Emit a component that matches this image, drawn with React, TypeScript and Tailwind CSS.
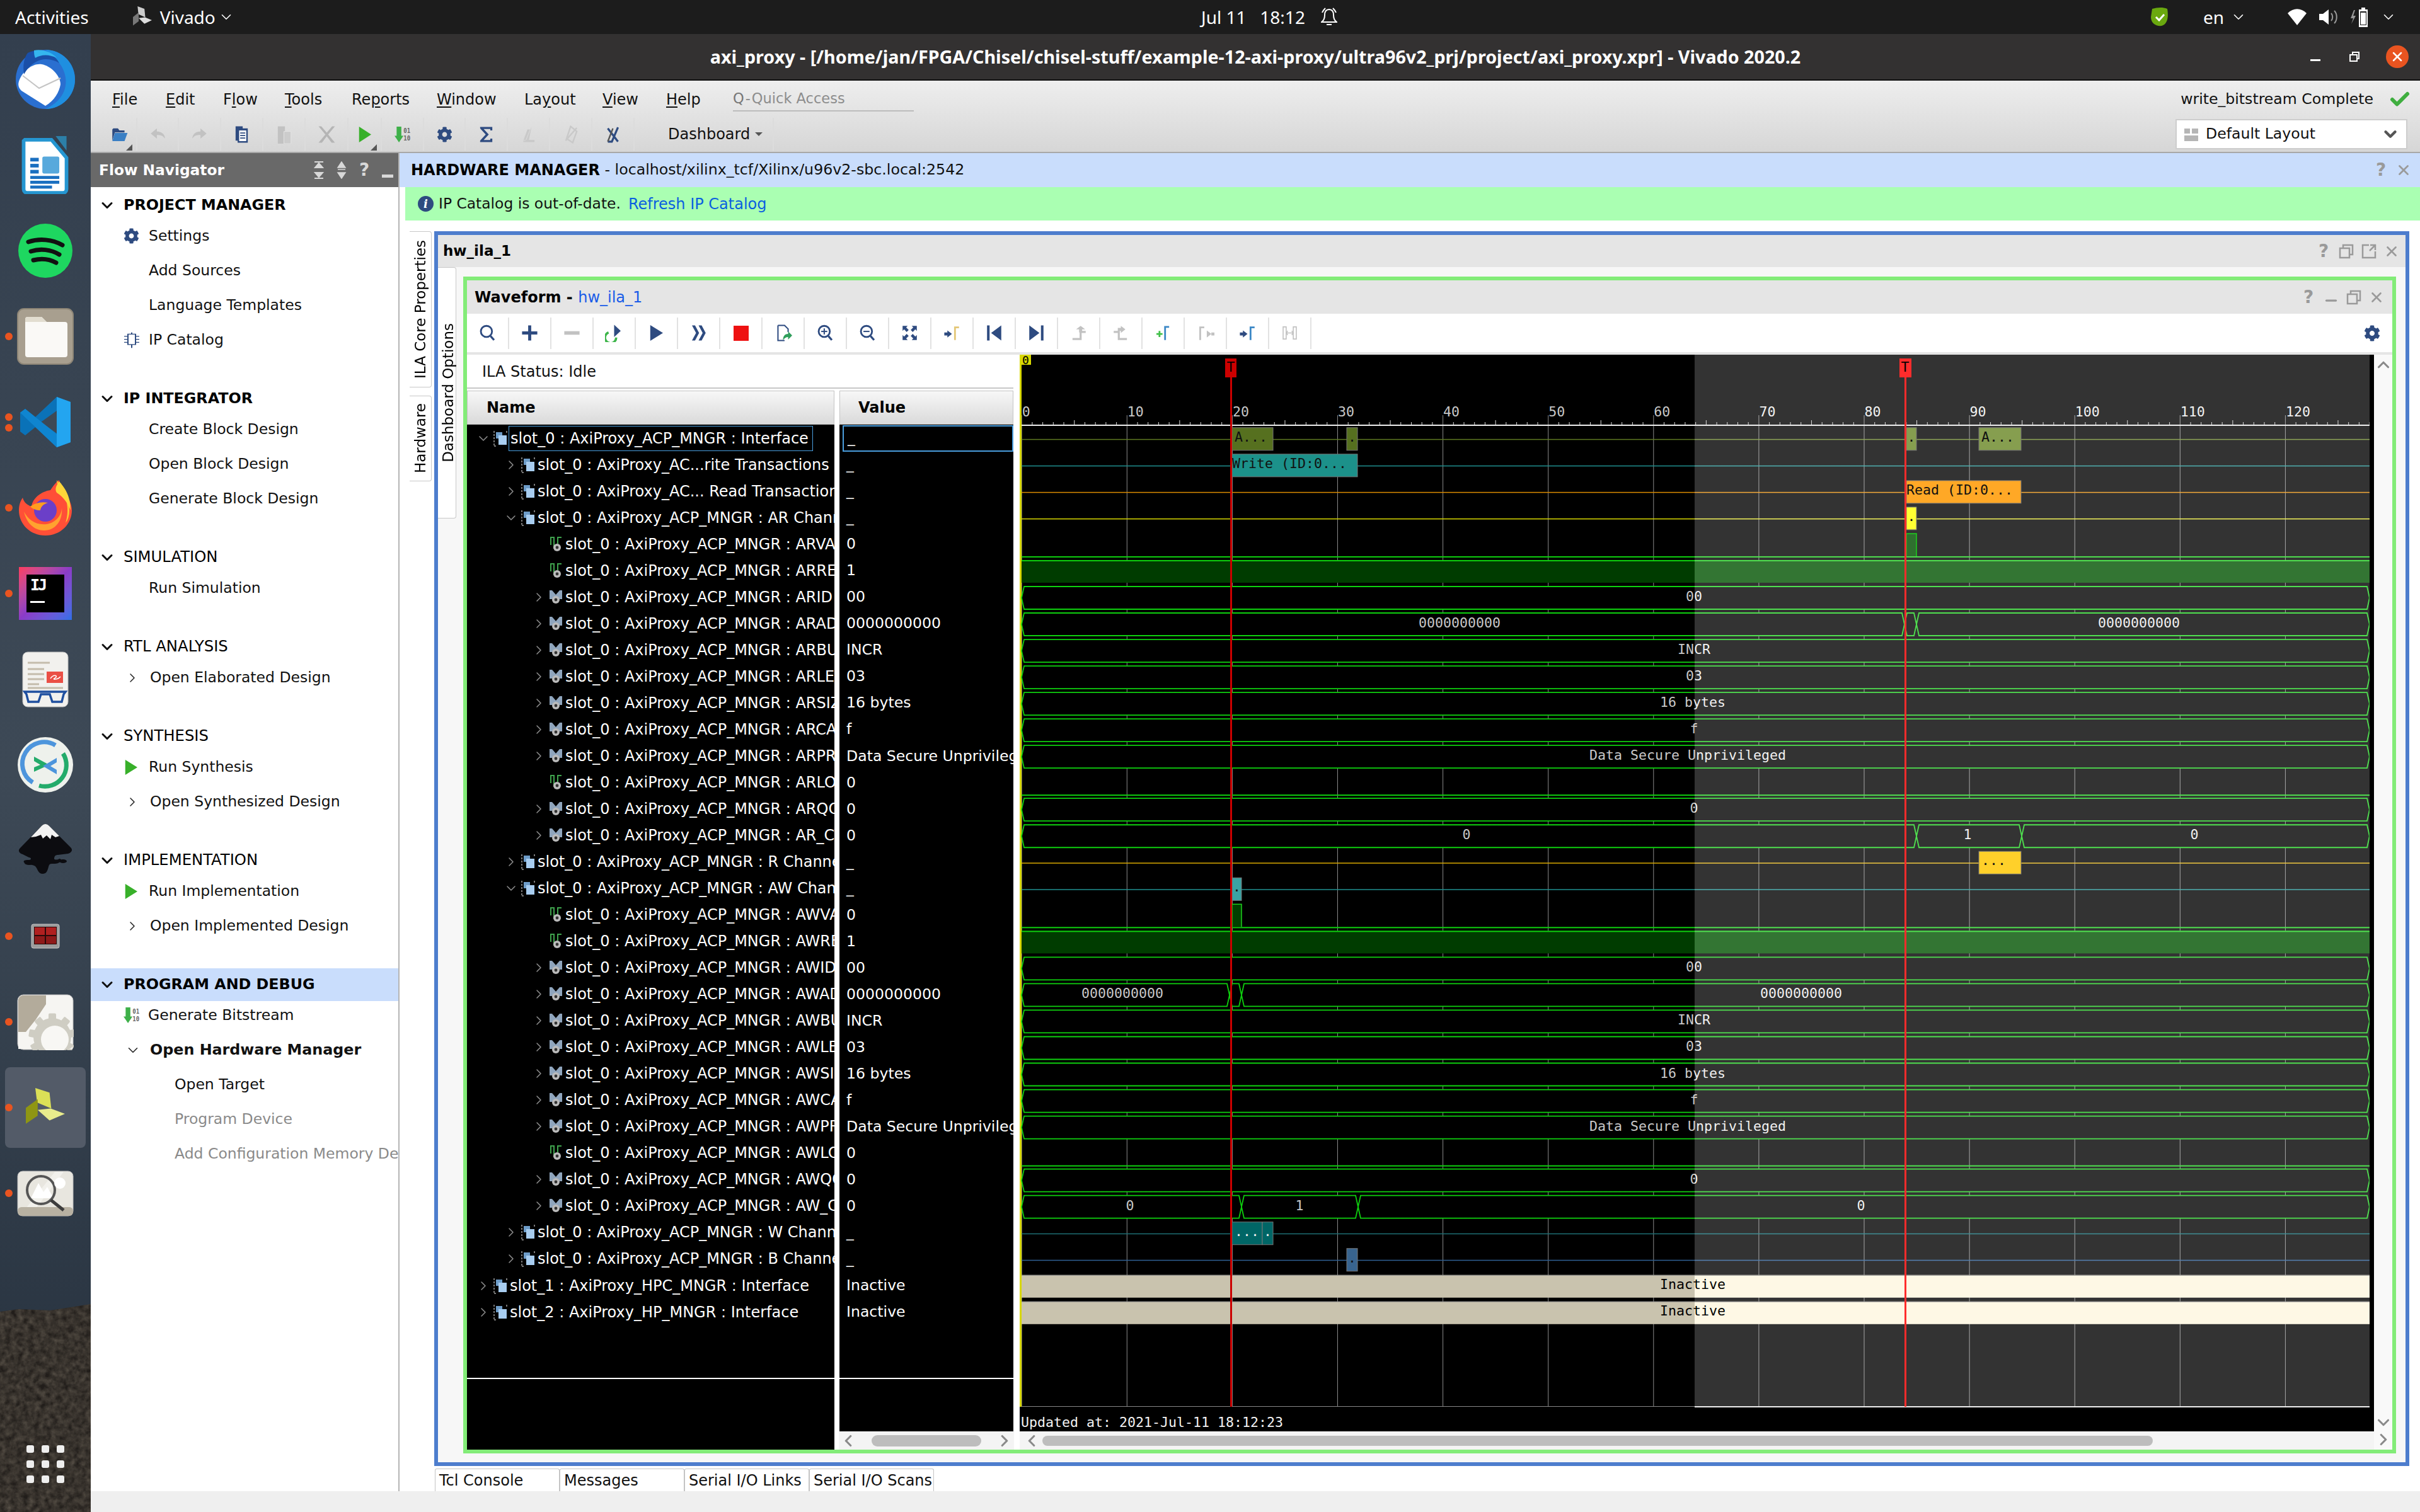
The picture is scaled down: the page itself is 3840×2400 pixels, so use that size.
import React from "react";
import { ChevronDown, ChevronRight, ChevronLeft, ChevronUp, X, Check, Minus } from "lucide-react";
import { FaCog } from "react-icons/fa";

type Row = { d: number; kind: "group" | "bus" | "leaf"; open?: boolean; name: string; value: string };

const P = "slot_0 : AxiProxy_ACP_MNGR : ";
const channel = (a: string, last: string): Row[] => [
  { d: 2, kind: "leaf", name: `${P}${a}VALID`, value: "0" },
  { d: 2, kind: "leaf", name: `${P}${a}READY`, value: "1" },
  { d: 2, kind: "bus", name: `${P}${a}ID`, value: "00" },
  { d: 2, kind: "bus", name: `${P}${a}ADDR`, value: "0000000000" },
  { d: 2, kind: "bus", name: `${P}${a}BURST`, value: "INCR" },
  { d: 2, kind: "bus", name: `${P}${a}LEN`, value: "03" },
  { d: 2, kind: "bus", name: `${P}${a}SIZE`, value: "16 bytes" },
  { d: 2, kind: "bus", name: `${P}${a}CACHE`, value: "f" },
  { d: 2, kind: "bus", name: `${P}${a}PROT`, value: "Data Secure Unprivileged" },
  { d: 2, kind: "leaf", name: `${P}${a}LOCK`, value: "0" },
  { d: 2, kind: "bus", name: `${P}${a}QOS`, value: "0" },
  { d: 2, kind: "bus", name: `${P}${last}`, value: "0" },
];

const rows: Row[] = [
  { d: 0, kind: "group", open: true, name: `${P}Interface`, value: "_" },
  { d: 1, kind: "group", name: "slot_0 : AxiProxy_AC...rite Transactions", value: "_" },
  { d: 1, kind: "group", name: "slot_0 : AxiProxy_AC... Read Transactions", value: "_" },
  { d: 1, kind: "group", open: true, name: `${P}AR Channel`, value: "_" },
  ...channel("AR", "AR_CTRL"),
  { d: 1, kind: "group", name: `${P}R Channel`, value: "_" },
  { d: 1, kind: "group", open: true, name: `${P}AW Channel`, value: "_" },
  ...channel("AW", "AW_CTRL"),
  { d: 1, kind: "group", name: `${P}W Channel`, value: "_" },
  { d: 1, kind: "group", name: `${P}B Channel`, value: "_" },
  { d: 0, kind: "group", name: "slot_1 : AxiProxy_HPC_MNGR : Interface", value: "Inactive" },
  { d: 0, kind: "group", name: "slot_2 : AxiProxy_HP_MNGR : Interface", value: "Inactive" },
];

const GroupIcon = () => (
  <svg width="22" height="26" viewBox="0 0 22 26" className="shrink-0">
    <path d="M1 1v24M21 1v3M1 25h3" stroke="#777" strokeWidth="2" strokeDasharray="3 2" fill="none" />
    <rect x="4" y="3" width="10" height="10" fill="#6d9cc8" />
    <rect x="8" y="8" width="13" height="15" fill="#a8cdf0" />
  </svg>
);

const BusIcon = () => (
  <svg width="22" height="26" viewBox="0 0 22 26" className="shrink-0">
    <path d="M1 2h4l6 7 6-7h4v14h-4l-6-4-6 4H1z" fill="#8fa5bd" />
    <circle cx="11" cy="17" r="6" fill="#bbb" />
    <circle cx="11" cy="17" r="2.4" fill="#333" />
  </svg>
);

const LeafIcon = () => (
  <svg width="22" height="26" viewBox="0 0 22 26" className="shrink-0">
    <path d="M3 14V2h5v18M14 12V2h6" stroke="#3fa34d" strokeWidth="2" fill="none" />
    <circle cx="13" cy="18" r="6" fill="#bbb" />
    <circle cx="13" cy="18" r="2.4" fill="#333" />
  </svg>
);

const SolidGear = ({ c = "#2e4b80" }: { c?: string }) => <FaCog size={25} color={c} />;

const Tri = ({ c = "#38b02a", w = 20, h = 24 }: { c?: string; w?: number; h?: number }) => (
  <svg width={w} height={h} viewBox="0 0 26 26" preserveAspectRatio="none">
    <path d="M1 0l25 13L1 26z" fill={c} />
  </svg>
);

const BitIcon = () => (
  <svg width="25" height="27" viewBox="0 0 30 28" preserveAspectRatio="none">
    <path d="M4 1h9v15h4L8.500 27 0 16h4z" fill="#3eb049" />
    <text x="17" y="11" fontSize="11" fontWeight="700" fill="#666" fontFamily="DejaVu Sans Mono">01</text>
    <text x="17" y="24" fontSize="11" fontWeight="700" fill="#666" fontFamily="DejaVu Sans Mono">10</text>
  </svg>
);

const NavChevron = () => <ChevronRight size={24} strokeWidth={1.5} color="#222" />;

const Section = ({ title, bold, active, children }: { title: string; bold?: boolean; active?: boolean; children: React.ReactNode }) => (
  <div className="mb-[44px]">
    <div className={`flex items-center gap-[12px] pl-[12px] ${active ? "h-[52px] -my-[4.5px] bg-[#c9ddfc]" : "h-[43px]"}`}>
      <ChevronDown size={28} strokeWidth={2.6} color="#111" />
      <span className={`text-black ${bold ? "font-bold text-[23.8px]" : "text-[24.3px]"}`}>{title}</span>
    </div>
    {children}
  </div>
);

const Item = ({ label, pad = 92, lead, grey, bold }: { label: string; pad?: number; lead?: React.ReactNode; grey?: boolean; bold?: boolean }) => (
  <div className="flex items-center h-[55px] whitespace-nowrap" style={{ paddingLeft: pad }}>
    {lead}
    <span className={`${grey ? "text-[#8a8a8a]" : "text-[#111]"} ${bold ? "font-bold text-[23.8px]" : "text-[23.5px]"}`}>{label}</span>
  </div>
);

const FlowNavigator = () => (
  <div className="w-[490px] shrink-0 flex flex-col border-r-2 border-[#b5b5b5] bg-white overflow-hidden">
    <div className="h-[54px] shrink-0 bg-[#696969] flex items-center pl-[13px] pr-[8px] text-white">
      <span className="font-bold text-[23.3px] flex-1">Flow Navigator</span>
      <div className="flex items-center gap-[16px] text-[#d8d8d8]">
        <svg width="20" height="28" viewBox="0 0 20 28"><path d="M3 1h14M3 27h14M10 3L4 10h12zM10 25l-6-7h12z" stroke="#d8d8d8" strokeWidth="2" fill="#d8d8d8" /></svg>
        <svg width="20" height="28" viewBox="0 0 20 28"><path d="M10 1L4 10h12zM10 27l-6-9h12zM4 13h12" stroke="#d8d8d8" strokeWidth="1.500" fill="#d8d8d8" /></svg>
        <span className="font-bold text-[28px] w-[20px] text-center">?</span>
        <span className="w-[18px] h-[5px] bg-[#d8d8d8] mt-[18px] ml-[2px]" />
      </div>
    </div>
    <div className="pt-[7px] flex-1">
      <Section title="PROJECT MANAGER" bold>
        <Item label="Settings" pad={52} lead={<span className="w-[40px] flex"><SolidGear /></span>} />
        <Item label="Add Sources" />
        <Item label="Language Templates" />
        <Item
          label="IP Catalog"
          pad={52}
          lead={
            <span className="w-[40px] flex">
              <svg width="26" height="26" viewBox="0 0 26 38" preserveAspectRatio="none"><path d="M7 5h12v24H7zM13 1v4M13 29v8M1 10h6M1 17h6M1 24h6M19 10h6M19 17h6M19 24h6" stroke="#2e4b80" strokeWidth="2" fill="none" /></svg>
            </span>
          }
        />
      </Section>
      <Section title="IP INTEGRATOR" bold>
        <Item label="Create Block Design" />
        <Item label="Open Block Design" />
        <Item label="Generate Block Design" />
      </Section>
      <Section title="SIMULATION">
        <Item label="Run Simulation" />
      </Section>
      <Section title="RTL ANALYSIS">
        <Item label="Open Elaborated Design" pad={52} lead={<span className="w-[42px] flex pl-[2px]"><NavChevron /></span>} />
      </Section>
      <Section title="SYNTHESIS">
        <Item label="Run Synthesis" pad={54} lead={<span className="w-[38px] flex"><Tri /></span>} />
        <Item label="Open Synthesized Design" pad={52} lead={<span className="w-[42px] flex pl-[2px]"><NavChevron /></span>} />
      </Section>
      <Section title="IMPLEMENTATION">
        <Item label="Run Implementation" pad={54} lead={<span className="w-[38px] flex"><Tri /></span>} />
        <Item label="Open Implemented Design" pad={52} lead={<span className="w-[42px] flex pl-[2px]"><NavChevron /></span>} />
      </Section>
      <Section title="PROGRAM AND DEBUG" bold active>
        <Item label="Generate Bitstream" pad={52} lead={<span className="w-[39px] flex"><BitIcon /></span>} />
        <Item label="Open Hardware Manager" bold pad={52} lead={<span className="w-[42px] flex pl-[2px]"><ChevronDown size={26} strokeWidth={1.5} color="#222" /></span>} />
        <Item label="Open Target" pad={133} />
        <Item label="Program Device" pad={133} grey />
        <Item label="Add Configuration Memory Device" pad={133} grey />
      </Section>
    </div>
  </div>
);

// ---- dock ----

const DockCell = ({ dots = 0, active, children }: { dots?: number; active?: boolean; children: React.ReactNode }) => (
  <div className="relative h-[136px] flex items-center justify-center">
    {active && <div className="absolute left-[8px] right-[8px] top-[4px] bottom-[4px] rounded-[8px] bg-[#535b68]" />}
    {dots > 0 && (
      <div className="absolute left-[8px] top-0 bottom-0 flex flex-col justify-center gap-[5px]">
        {Array.from({ length: dots }).map((_, i) => (
          <span key={i} className="w-[12px] h-[12px] rounded-full bg-[#e95420]" />
        ))}
      </div>
    )}
    <div className="relative flex">{children}</div>
  </div>
);

const Cog = ({ cx, cy, r, fill }: { cx: number; cy: number; r: number; fill: string }) => (
  <g fill={fill}>
    {[0, 40, 80, 120, 160, 200, 240, 280, 320].map((a) => (
      <rect key={a} x={cx - r * 0.2} y={cy - r * 1.25} width={r * 0.4} height={r * 0.5} rx="2" transform={`rotate(${a} ${cx} ${cy})`} />
    ))}
    <circle cx={cx} cy={cy} r={r} />
  </g>
);

const Dock = () => (
  <div className="relative w-[144px] shrink-0 bg-gradient-to-b from-[#333f4e] via-[#3d4956] to-[#25303d] overflow-hidden">
    <div className="relative pt-[4px]">
      <DockCell>
        <svg width="96" height="96" viewBox="0 0 96 96">
          <ellipse cx="48" cy="48" rx="47" ry="47" fill="#2a6fd0" />
          <path d="M48 1c26 0 47 21 47 47S74 95 48 95c14-6 36-22 32-50C77 24 60 10 48 1z" fill="#1f8fe0" />
          <path d="M8 46c6-12 20-24 34-22 14 2 30 18 30 32-2 12-10 26-24 34L10 66C4 60 4 54 8 46z" fill="#fff" />
          <path d="M12 42l26 20 34-16" stroke="#c5c5c5" strokeWidth="2" fill="none" />
          <path d="M20 6C34-2 60 2 70 22 54 12 30 12 14 40 12 26 14 14 20 6z" fill="#1a4fa8" />
          <path d="M30 2c14-3 30 4 36 12-12-6-24-6-34 0-2-4-2-8-2-12z" fill="#35b6ef" />
        </svg>
      </DockCell>
      <DockCell>
        <svg width="76" height="92" viewBox="0 0 78 96">
          <path d="M5 6h44l25 30v52a6 6 0 0 1-6 6H9a6 6 0 0 1-6-6V8z" fill="#fff" stroke="#2596d1" strokeWidth="6" />
          <path d="M56 0h18v24z" fill="#2c7fa8" />
          <rect x="14" y="36" width="14" height="6" fill="#1a6fc0" />
          <rect x="14" y="46" width="14" height="6" fill="#1a6fc0" />
          <rect x="14" y="56" width="14" height="6" fill="#1a6fc0" />
          <rect x="34" y="34" width="28" height="28" rx="3" fill="#58a9dc" />
          <rect x="14" y="66" width="48" height="5" fill="#1a6fc0" />
          <rect x="14" y="74" width="48" height="5" fill="#1a6fc0" />
          <rect x="14" y="82" width="36" height="5" fill="#1a6fc0" />
        </svg>
      </DockCell>
      <DockCell>
        <svg width="86" height="86" viewBox="0 0 86 86">
          <circle cx="43" cy="43" r="43" fill="#1ed760" />
          <path d="M16 29c18-6 38-4 54 5M20 44c15-5 32-3 45 5M24 58c12-3 25-2 36 4" stroke="#111" strokeWidth="7" strokeLinecap="round" fill="none" />
        </svg>
      </DockCell>
      <DockCell dots={1}>
        <svg width="90" height="90" viewBox="0 0 90 90">
          <rect x="1" y="1" width="88" height="88" rx="10" fill="#a89f8f" stroke="#8d8576" strokeWidth="2" />
          <path d="M13 18a4 4 0 0 1 4-4h22l8 8h29a4 4 0 0 1 4 4v48a4 4 0 0 1-4 4H17a4 4 0 0 1-4-4z" fill="#faf9f6" />
          <path d="M13 18a4 4 0 0 1 4-4h22l8 8H13z" fill="#e2ddd0" />
        </svg>
      </DockCell>
      <DockCell dots={2}>
        <svg width="84" height="84" viewBox="0 0 84 84">
          <path d="M60 2L26 34 10 21 2 27v30l8 6 16-13 34 32 22-8V10z" fill="#0a72b8" />
          <path d="M60 2l22 8v64l-22 8z" fill="#23a5f0" />
          <path d="M60 24L35 42l25 18z" fill="#3d4956" />
          <path d="M10 21l50 40v21L2 27z" fill="#0f85d0" />
        </svg>
      </DockCell>
      <DockCell dots={1}>
        <svg width="84" height="88" viewBox="0 0 84 88">
          <path d="M42 88C18 88 0 70 0 48c0-8 2-14 6-20 2 8 8 12 14 14 2-14 16-24 30-26 4-6 8-12 14-16 0 8 6 12 12 24 6 10 8 18 8 24 0 22-18 40-42 40z" fill="#ff4f37" />
          <path d="M60 0c0 10 8 14 14 26 8 14 8 32 0 42C82 44 74 20 60 0z" fill="#ffcb2e" />
          <path d="M64 2c8 10 18 22 18 46-4-10-10-20-22-28C56 14 60 8 64 2z" fill="#ffd739" />
          <path d="M8 50c6 12 18 22 36 20 14-2 24-14 24-26 2 20-10 36-28 36-16 0-28-12-32-30z" fill="#ffa22f" />
          <circle cx="42" cy="48" r="18" fill="#6b3fc8" />
          <path d="M18 42c8-6 18-8 28-6-8 2-12 8-12 12-6 0-12-2-16-6z" fill="#ff9e1f" />
        </svg>
      </DockCell>
      <DockCell dots={1}>
        <div className="relative w-[84px] h-[84px] bg-gradient-to-br from-[#ff3a5c] via-[#8b3bc8] to-[#2a6fe8] flex">
          <div className="m-auto w-[60px] h-[60px] bg-black flex flex-col pl-[6px] pt-[2px]">
            <span className="text-white text-[25px] font-bold leading-[30px] font-['DejaVu_Sans_Mono',monospace] tracking-[-3px]">IJ</span>
            <span className="w-[23px] h-[3px] bg-white mt-[10px]" />
          </div>
        </div>
      </DockCell>
      <DockCell>
        <svg width="74" height="89" viewBox="0 0 74 89">
          <rect x="1" y="1" width="72" height="87" rx="8" fill="#f2f1ee" stroke="#bbb" />
          <path d="M9 18h35M9 28h26M9 36h26M9 44h26M9 52h18M9 58h56" stroke="#c4bcab" strokeWidth="3" />
          <rect x="39" y="32" width="26" height="18" fill="#ea4f45" />
          <path d="M45 43c6-8 14-4 6 0-3 2 6 2 10-3" stroke="#fff" strokeWidth="1.500" fill="none" />
          <path d="M4 64h65l-3 4-3 12H48l-4-12h-14l-4 12H10L7 68z" fill="none" stroke="#1f4f9f" strokeWidth="3.500" />
        </svg>
      </DockCell>
      <DockCell>
        <svg width="88" height="88" viewBox="0 0 88 88">
          <circle cx="44" cy="44" r="44" fill="#eef1ec" />
          <path d="M24 72A34 34 0 0 1 60 13" stroke="#4d95dc" strokeWidth="7" fill="none" />
          <path d="M72 26A34 34 0 0 1 34 77" stroke="#23ab6a" strokeWidth="7" fill="none" />
          <path d="M26 31l24 13-24 11v-7l10-4-10-6z" fill="#23ab6a" />
          <path d="M62 33L40 46l22 13v-7l-10-6 10-6z" fill="#4d95dc" />
        </svg>
      </DockCell>
      <DockCell>
        <svg width="88" height="84" viewBox="0 0 88 84">
          <path d="M44 0c2 0 4 1 6 3l34 34c4 4 2 8-4 10l-16 2c-4 0-6 2-6 6 0 2 6 2 8 0 4 0 4 4 0 6-6 4-14 0-16 4-2 4-2 14-10 14-8 0-8-8-12-12-6-4-14-2-18-6-2-4 4-4 8-4 4 0 4-4 0-4L8 48c-6-2-8-6-4-10L38 3c2-2 4-3 6-3z" fill="#0c0c10" />
          <path d="M44 0c2 0 4 1 6 3l16 16-6 2-6-4-2 7-6-6-6 5-3-6-8 3-8 1L38 3c2-2 4-3 6-3z" fill="#f2f2f2" />
          <ellipse cx="72" cy="59" rx="6" ry="3" fill="#0c0c10" />
          <ellipse cx="18" cy="62" rx="7" ry="3" fill="#0c0c10" />
        </svg>
      </DockCell>
      <DockCell dots={1}>
        <svg width="46" height="40" viewBox="0 0 46 40">
          <rect x="1" y="1" width="44" height="38" rx="3" fill="#9c9c9c" stroke="#c4c4c4" />
          <rect x="5" y="5" width="36" height="28" fill="#2a0a0a" />
          <rect x="6" y="6" width="16" height="12" fill="#b02020" />
          <rect x="24" y="6" width="16" height="12" fill="#b02020" />
          <rect x="6" y="20" width="16" height="12" fill="#8e1a1a" />
          <rect x="24" y="20" width="16" height="12" fill="#8e1a1a" />
        </svg>
      </DockCell>
      <DockCell dots={1}>
        <svg width="90" height="89" viewBox="0 0 90 89">
          <rect x="1" y="1" width="88" height="87" rx="9" fill="#f6f5f2" stroke="#bbb" />
          <path d="M2 60V9a8 8 0 0 1 8-7h36v14L30 40 14 60z" fill="#b3ab9b" />
          <Cog cx={56} cy={68} r={30} fill="#cfcdc3" />
          <circle cx="60" cy="72" r="22" fill="#f8f7f4" />
          <path d="M2 80a8 8 0 0 0 8 7h72a8 8 0 0 0 6-4v4H2z" fill="#f6f5f2" />
        </svg>
      </DockCell>
      <DockCell dots={1} active>
        <svg width="62" height="63" viewBox="0 0 66 60" preserveAspectRatio="none">
          <path d="M16 0l24 7 3 24L19 22z" fill="#dbe057" />
          <path d="M0 30l20-13v25L0 54z" fill="#8f9613" />
          <path d="M20 33l22-2 24 8-26 10z" fill="#e9ec8c" />
        </svg>
      </DockCell>
      <DockCell dots={1}>
        <svg width="90" height="73" viewBox="0 0 90 73">
          <rect x="1" y="1" width="88" height="71" rx="8" fill="#e8e6df" stroke="#bbb" />
          <path d="M14 60L60 2h14L30 60z" fill="#f2f1ec" />
          <rect x="1" y="58" width="88" height="14" rx="6" fill="#b8b1a2" />
          <path d="M22 44l12-24 8 14 6-8 10 18z" fill="#fff" />
          <circle cx="38" cy="31" r="22" fill="none" stroke="#555" strokeWidth="4" />
          <path d="M54 47l20 16" stroke="#3c3c3c" strokeWidth="5" />
          <circle cx="68" cy="20" r="9" fill="#fff" />
        </svg>
      </DockCell>
    </div>
    <svg className="absolute left-0 bottom-0" width="144" height="330" viewBox="0 0 144 330">
      <defs>
        <filter id="hill">
          <feTurbulence type="fractalNoise" baseFrequency="0.11" numOctaves="3" />
          <feColorMatrix values="0 0 0 0 0.2  0 0 0 0 0.17  0 0 0 0 0.13  0.5 0 0 0.5 -0.25" />
          <feComposite in2="SourceGraphic" operator="in" />
        </filter>
      </defs>
      <path d="M0 12l30-4 50 2 64-10v330H0z" fill="#211d1a" />
      <path d="M0 12l30-4 50 2 64-10v330H0z" filter="url(#hill)" />
    </svg>
    <div className="absolute left-[42px] bottom-[46px] grid grid-cols-3 gap-x-[12px] gap-y-[12px]">
      {Array.from({ length: 9 }).map((_, i) => (
        <span key={i} className="w-[12px] h-[12px] rounded-[3px] bg-[#eeeeee]" />
      ))}
    </div>
  </div>
);

// ---- toolbars ----

const I = ({ children }: { children: React.ReactNode }) => (
  <svg width="29" height="29" viewBox="0 0 36 36">{children}</svg>
);
const B = "#2e4b80";
const G = "#c2c2c2";

const Lens = ({ c = B, mark }: { c?: string; mark?: "+" | "-" }) => (
  <I>
    <circle cx="16" cy="15" r="11" fill="none" stroke={c} strokeWidth="3.500" />
    <path d="M24 24l7 8" stroke={c} strokeWidth="4" />
    {mark && <path d="M10 15h12" stroke={c} strokeWidth="2.500" />}
    {mark === "+" && <path d="M16 9v12" stroke={c} strokeWidth="2.500" />}
  </I>
);

const Marker = ({ c, arrow, left }: { c: string; arrow: string; left?: boolean }) => (
  <I>
    {left ? <path d="M8 32V7h8" stroke={c} strokeWidth="3.500" fill="none" /> : <path d="M24 32V7h8" stroke={c} strokeWidth="3.500" fill="none" />}
    {left ? <path d="M30 20l-9-7v14zM36 17v6h-6v-6z" fill={arrow} /> : <path d="M18 20l-9-7v4H3v6h6v4z" fill={arrow} />}
  </I>
);

const waveTools: React.ReactNode[] = [
  <Lens key="s" />,
  <I key="p"><path d="M18 3v30M3 18h30" stroke={B} strokeWidth="6" /></I>,
  <I key="m"><path d="M3 18h30" stroke={G} strokeWidth="7" /></I>,
  <I key="r">
    <path d="M7 17a11 11 0 1 0 15 10" stroke="#3db54a" strokeWidth="4.500" fill="none" />
    <path d="M18 2l13 12-13 12z" fill={B} />
  </I>,
  <Tri key="pl" c={B} w={21} h={25} />,
  <I key="ff"><path d="M5 3h6l8 15-8 15H5l8-15zM18 3h6l8 15-8 15h-6l8-15z" fill={B} /></I>,
  <div key="st" className="w-[24px] h-[24px] bg-[#ee1111]" />,
  <I key="ex">
    <path d="M8 3h13l7 7v6M8 3v30h13" stroke={B} strokeWidth="2.500" fill="none" />
    <path d="M18 32c0-8 4-12 10-12v-5l8 8-8 8v-5c-4 0-7 2-10 6z" fill="#2f9e5b" />
  </I>,
  <Lens key="zi" mark="+" />,
  <Lens key="zo" mark="-" />,
  <I key="fit"><path d="M4 4h10L11 7l5 5-4 4-5-5-3 3zM32 4v10l-3-3-5 5-4-4 5-5-3-3zM4 32V22l3 3 5-5 4 4-5 5 3 3zM32 32H22l3-3-5-5 4-4 5 5 3-3z" fill={B} /></I>,
  <Marker key="gc" c="#e4c777" arrow={B} />,
  <I key="fi"><path d="M4 3h5v30H4zM32 3v30L12 18z" fill={B} /></I>,
  <I key="la"><path d="M27 3h5v30h-5zM4 3v30l20-15z" fill={B} /></I>,
  <I key="pt"><path d="M6 28h14V14h12v4h-8v14H6zM22 4l9 7h-6v6h-6v-6h-6z" fill={G} /></I>,
  <I key="nt"><path d="M4 14h12v14h14v4H12V18H4zM18 4l9 7-9 7v-4h-6V8h6z" fill={G} /></I>,
  <I key="am">
    <path d="M22 32V6h8" stroke="#3c88c6" strokeWidth="3.500" fill="none" />
    <path d="M11 14v12M5 20h12" stroke="#42c04a" strokeWidth="3.500" />
  </I>,
  <Marker key="pm" c={G} arrow={G} left />,
  <Marker key="nm" c="#3c88c6" arrow={B} />,
  <I key="sw">
    <path d="M5 6v24h6V6zM25 6v24h6V6z" fill="none" stroke={G} strokeWidth="2" />
    <path d="M12 18h12M14 14l-3 4 3 4M22 14l3 4-3 4" stroke={G} strokeWidth="2" fill="none" />
  </I>,
];

const mainTools: { el: React.ReactNode; w: number; caret?: boolean; shift?: number }[] = [
  { el: <I><path d="M6 6h9l3 4h10v4H9l-5 16V8z" fill={B} /><path d="M9 15h25l-6 16H4z" fill="#3a7fc4" /></I>, w: 67, caret: true, shift: 12 },
  { el: <I><path d="M4 16l12-10v6c10 0 16 6 16 14-4-6-8-7-16-7v7z" fill={G} /></I>, w: 66 },
  { el: <I><path d="M32 16L20 6v6C10 12 4 18 4 26c4-6 8-7 16-7v7z" fill={G} /></I>, w: 67 },
  { el: <I><path d="M6 2h14v4H10v24H6zM10 6h20v28H10z" fill={B} /><path d="M13 10h14v21H13z" fill="#fff" /><path d="M15 15h10M15 20h10M15 25h10" stroke={B} strokeWidth="2" /></I>, w: 67 },
  { el: <I><path d="M6 2h14v34H6z" fill={G} /><path d="M18 12h14v24H18z" fill="#ccc" stroke="#e8e8e8" /></I>, w: 67 },
  { el: <I><path d="M7 3l11 13L29 3h3L19.500 18 32 33h-4L18 20 8 33H4l12.500-15L4 3z" fill="#b5b5b5" stroke="#b5b5b5" strokeWidth="2" /></I>, w: 68 },
  { el: <Tri w={20} h={25} />, w: 53, caret: true },
  { el: <BitIcon />, w: 67 },
  { el: <FaCog size={25} color={B} />, w: 66 },
  { el: <I><path d="M6 3h24v7h-4V7H13l10 11-10 11h13v-3h4v7H6v-3l11-12L6 6z" fill={B} /></I>, w: 67 },
  { el: <I><path d="M8 30L16 8h5L12 30zM8 33h22v-4H8zM24 3l-10 26h5z" fill="#c9c9c9" /></I>, w: 67 },
  { el: <I><path d="M18 2l12 10-8 22-12-8zM8 30L30 5" stroke="#c9c9c9" strokeWidth="3" fill="none" /></I>, w: 67 },
  { el: <I><path d="M8 6l20 26M28 4L16 32H8" stroke={B} strokeWidth="4" fill="none" /><path d="M8 32l10-26" stroke="#555" strokeWidth="3" /></I>, w: 67 },
];

const WinBtn = ({ children }: { children: React.ReactNode }) => (
  <span className="w-[36px] h-[30px] flex items-center justify-center">{children}</span>
);
const Q = () => <span className="font-bold text-[28px] text-[#9a9a9a] leading-none">?</span>;
const Restore = () => (
  <svg width="24" height="24" viewBox="0 0 24 24"><path d="M7 7V2h15v15h-5M2 7h15v15H2z" stroke="#9a9a9a" strokeWidth="2.500" fill="none" /></svg>
);
const Float = () => (
  <svg width="24" height="24" viewBox="0 0 24 24"><path d="M12 2H2v20h20V12M14 2h8v8M22 2L13 11" stroke="#9a9a9a" strokeWidth="2.500" fill="none" /></svg>
);
const Xx = () => <X size={26} color="#9a9a9a" strokeWidth={2.500} />;

// ---- waveform ----

const T0 = 678.8;
const PITCH = 42.03;
const EDGE = 2689;
const L = 1621;
const R = 3760;
const top = (i: number) => T0 + PITCH * i;
const X10 = (k: number) => 1620.7 + 167.1 * k;

const grads: [string, string, string][] = [
  ["gGreen", "#0ed00e", "#4fe04f"],
  ["gFill", "#003c00", "#337533"],
  ["gBus", "#000000", "#333333"],
  ["gTxt", "#c8c8c8", "#f2f2f2"],
  ["gOlive", "#5f7a22", "#8fa658"],
  ["gTeal", "#1f8f8f", "#4fb0b0"],
  ["gOrange", "#d98a00", "#f2a93a"],
  ["gYellow", "#d8d800", "#f4f45a"],
  ["gAmber", "#d8a800", "#f0c840"],
  ["gTeal2", "#1d6f75", "#3f8f95"],
  ["gBlue", "#2f5f92", "#5580b0"],
];

const CX = 2688;
const busRows: Record<number, { segs: number[]; labels: [string, number][] }> = {
  6: { segs: [L, R], labels: [["00", CX]] },
  7: { segs: [L, 3022, 3041, R], labels: [["0000000000", 2316], ["0000000000", 3394]] },
  8: { segs: [L, R], labels: [["INCR", CX]] },
  9: { segs: [L, R], labels: [["03", CX]] },
  10: { segs: [L, R], labels: [["16 bytes", CX - 2]] },
  11: { segs: [L, R], labels: [["f", CX]] },
  12: { segs: [L, R], labels: [["Data Secure Unprivileged", CX - 10]] },
  14: { segs: [L, R], labels: [["0", CX]] },
  15: { segs: [L, 3041, 3208, R], labels: [["0", 2327], ["1", 3122], ["0", 3482]] },
  20: { segs: [L, R], labels: [["00", CX]] },
  21: { segs: [L, 1951, 1970, R], labels: [["0000000000", 1781], ["0000000000", 2858]] },
  22: { segs: [L, R], labels: [["INCR", CX]] },
  23: { segs: [L, R], labels: [["03", CX]] },
  24: { segs: [L, R], labels: [["16 bytes", CX - 2]] },
  25: { segs: [L, R], labels: [["f", CX]] },
  26: { segs: [L, R], labels: [["Data Secure Unprivileged", CX - 10]] },
  28: { segs: [L, R], labels: [["0", CX]] },
  29: { segs: [L, 1970, 2155, R], labels: [["0", 1793], ["1", 2062], ["0", 2953]] },
};

const lanes: [number, string][] = [
  [0, "gOlive"],
  [1, "gTeal"],
  [2, "gOrange"],
  [3, "gYellow"],
  [16, "gAmber"],
  [17, "gTeal"],
  [30, "gTeal2"],
  [31, "gBlue"],
];

const boxes: { r: number; a: number; b: number; fill: string; t: string; dark?: boolean }[] = [
  { r: 0, a: 1955, b: 2020, fill: "#56701f", t: "A..." },
  { r: 0, a: 2137, b: 2154, fill: "#56701f", t: "." },
  { r: 0, a: 3025, b: 3041, fill: "#869e4f", t: "." },
  { r: 0, a: 3140, b: 3207, fill: "#869e4f", t: "A..." },
  { r: 1, a: 1955, b: 2154, fill: "#1c918a", t: "Write (ID:0..." },
  { r: 2, a: 3025, b: 3207, fill: "#ffa826", t: "Read (ID:0..." },
  { r: 3, a: 3025, b: 3041, fill: "#ffff33", t: "." },
  { r: 16, a: 3140, b: 3207, fill: "#ffd02a", t: "..." },
  { r: 17, a: 1955, b: 1970, fill: "#3aa3a3", t: "." },
  { r: 30, a: 1955, b: 2003, fill: "#006666", t: "...", dark: true },
  { r: 30, a: 2003, b: 2020, fill: "#006666", t: ".", dark: true },
  { r: 31, a: 2137, b: 2154, fill: "#38648f", t: "." },
];

const Waveform = () => {
  const ticks = Array.from({ length: 129 }, (_, i) => i);
  return (
    <svg className="block flex-1 font-['DejaVu_Sans_Mono',monospace]" width="2149" height="1709" viewBox="1618 563 2149 1709" fontSize="21.6">
      <defs>
        {grads.map(([id, l, r]) => (
          <linearGradient key={id} id={id} gradientUnits="userSpaceOnUse" x1={EDGE - 0.5} x2={EDGE + 0.5} y1="0" y2="0">
            <stop offset="0" stopColor={l} />
            <stop offset="1" stopColor={r} />
          </linearGradient>
        ))}
      </defs>
      <rect x="1618" y="563" width="2149" height="1709" fill="#000" />
      <rect x={EDGE} y="563" width={R - EDGE} height={2233 - 563} fill="#333" />
      {/* grid and time axis */}
      {Array.from({ length: 13 }, (_, k) => (
        <g key={k}>
          <rect x={X10(k)} y="659" width="1" height={2233 - 659} fill={X10(k) > EDGE ? "#a8a8a8" : "#8a8a8a"} />
          <text x={X10(k) + 1} y="661" fill={X10(k) > EDGE ? "#f2f2f2" : "#c8c8c8"}>{k * 10}</text>
        </g>
      ))}
      {ticks.map((i) =>
        i % 10 === 0 ? null : (
          <rect key={i} x={1620.7 + 16.71 * i} y={i % 5 === 0 ? 667 : 670} width="1" height={i % 5 === 0 ? 8 : 5} fill="#ddd" />
        ),
      )}
      <rect x={L} y="674" width={R - L} height="2" fill="#eee" />
      <rect x={L} y="2232" width={EDGE - L} height="1" fill="#888" />
      <rect x={EDGE} y="2232" width={R - EDGE} height="2" fill="#eee" />
      <rect x="1618" y="563" width="3" height={2233 - 563} fill="#d8d800" />
      <rect x="1620" y="563" width="16" height="16" fill="#d8d800" />
      <text x="1622" y="578" fontSize="18" fill="#000">0</text>
      {/* transaction lanes */}
      {lanes.map(([r, g]) => (
        <rect key={r} x={L} y={top(r) + 18} width={R - L} height="1.500" fill={`url(#${g})`} />
      ))}
      {/* valid / ready rows */}
      {[4, 13, 18, 27].map((r) => (
        <rect key={r} x={L} y={top(r) + 36} width={R - L} height="2" fill="url(#gGreen)" />
      ))}
      {[5, 19].map((r) => (
        <g key={r}>
          <rect x={L} y={top(r)} width={R - L} height="36" fill="url(#gFill)" />
          <rect x={L} y={top(r)} width={R - L} height="2" fill="url(#gGreen)" />
        </g>
      ))}
      {[
        [4, 3025, 3041, "#2f6f2f"],
        [18, 1955, 1970, "#004000"],
      ].map(([r, a, b, f]) => (
        <path
          key={r as number}
          d={`M${a} ${top(r as number) + 36}V${top(r as number)}H${b}V${top(r as number) + 36}`}
          fill={f as string}
          stroke="#1ed01e"
          strokeWidth="1.500"
        />
      ))}
      {/* bus rows */}
      {Object.entries(busRows).map(([key, { segs, labels }]) => {
        const r = Number(key);
        const t = top(r);
        return (
          <g key={key}>
            {segs.slice(0, -1).map((a, i) => {
              const b = segs[i + 1];
              return (
                <path
                  key={i}
                  d={`M${a} ${t + 18}L${a + 4} ${t}H${b - 4}L${b} ${t + 18}L${b - 4} ${t + 36}H${a + 4}z`}
                  fill="url(#gBus)"
                  stroke="url(#gGreen)"
                  strokeWidth="1.800"
                />
              );
            })}
            {labels.map(([s, x], i) => (
              <text key={i} x={x} y={t + 23} textAnchor="middle" fill="url(#gTxt)">{s}</text>
            ))}
          </g>
        );
      })}
      {/* transaction boxes */}
      {boxes.map((b, i) => (
        <g key={i}>
          <rect x={b.a} y={top(b.r)} width={b.b - b.a} height="36" fill={b.fill} stroke="#777" strokeWidth="1" />
          <text
            x={b.t.length === 1 ? (b.a + b.b) / 2 : b.a + (b.t.length > 4 ? 0 : 4)}
            y={top(b.r) + 22}
            textAnchor={b.t.length === 1 ? "middle" : "start"}
            fill={b.dark ? "#eee" : "#111"}
          >
            {b.t}
          </text>
        </g>
      ))}
      {/* inactive slots */}
      {[32, 33].map((r) => (
        <g key={r}>
          <rect x={L} y={top(r)} width={EDGE - L} height="36" fill="#c9c3ae" />
          <rect x={EDGE} y={top(r)} width={R - EDGE} height="36" fill="#fef8e5" />
          <rect x={L} y={top(r)} width={R - L} height="1" fill="#8a8a8a" />
          <text x="2686" y={top(r) + 22} textAnchor="middle" fill="#000">Inactive</text>
        </g>
      ))}
      {/* cursors */}
      <rect x="1952" y="599" width="3" height={2233 - 599} fill="#cc0000" />
      <rect x="1944" y="569" width="18" height="30" fill="#cc0000" />
      <text x="1953" y="590" textAnchor="middle" fill="#000">T</text>
      <rect x="3022" y="599" width="3" height={2233 - 599} fill="#ff2c2c" />
      <rect x="3014" y="569" width="19" height="30" fill="#ff2c2c" />
      <text x="3023" y="590" textAnchor="middle" fill="#000">T</text>
      <rect x={R} y="563" width="7" height="1709" fill="#000" />
      <text x="1620" y="2265" fill="#f2f2f2">Updated at: 2021-Jul-11 18:12:23</text>
    </svg>
  );
};

const TreeRow = ({ r, i }: { r: Row; i: number }) => {
  const pad = [14, 58, 102][r.d];
  const selected = i === 0;
  return (
    <div className="h-[42.030px] flex items-center whitespace-nowrap text-white text-[24px]" style={{ paddingLeft: pad }}>
      <span className="w-[24px] flex justify-center shrink-0 mr-[4px] text-[#8f8f8f]">
        {r.kind === "leaf" ? null : r.open ? <ChevronDown size={26} strokeWidth={1.500} /> : <ChevronRight size={26} strokeWidth={1.500} />}
      </span>
      {r.kind === "group" ? <GroupIcon /> : r.kind === "bus" ? <BusIcon /> : <LeafIcon />}
      <span className={selected ? "ml-[2px] pl-[2px] pr-[6px] border border-[#4a9ede] h-[40px] flex items-center" : "ml-[4px]"}>{r.name}</span>
    </div>
  );
};

const colHead = "h-[54px] shrink-0 bg-gradient-to-b from-[#f7f7f7] to-[#dadada] border border-[#c4c4c4] flex items-center font-bold text-[24px] text-black";

const Arrow = ({ left }: { left?: boolean }) =>
  left ? <ChevronLeft size={30} color="#8a8a8a" strokeWidth={2.500} /> : <ChevronRight size={30} color="#8a8a8a" strokeWidth={2.500} />;

const VTab = ({ label, h, w, pad = 0 }: { label: string; h: number; w: number; pad?: number }) => (
  <div className="border-y border-r border-[#c8c8c8] rounded-r-[4px] bg-white flex items-center justify-center" style={{ height: h, width: w, paddingLeft: pad }}>
    <span className="[writing-mode:vertical-rl] rotate-180 text-[23px] text-black whitespace-nowrap">{label}</span>
  </div>
);

const WaveformPanel = () => (
  <div className="flex-1 min-w-0 flex flex-col border-[6px] border-[#83ec78]">
    <div className="h-[53px] shrink-0 bg-[#e5e5e5] flex items-center pl-[12px] pr-[7px] text-[24px]">
      <span className="font-bold text-black">Waveform -&nbsp;</span>
      <span className="text-[#1a5ce8]">hw_ila_1</span>
      <div className="ml-auto flex items-center">
        <WinBtn><Q /></WinBtn>
        <WinBtn><Minus size={26} color="#9a9a9a" strokeWidth={3} className="mt-[10px]" /></WinBtn>
        <WinBtn><Restore /></WinBtn>
        <WinBtn><Xx /></WinBtn>
      </div>
    </div>
    <div className="h-[61px] shrink-0 bg-white flex items-center">
      {waveTools.map((el, i) => (
        <div key={i} className="w-[67px] h-[50px] flex items-center justify-center border-r-2 border-[#e2e2e2]">
          {el}
        </div>
      ))}
      <span className="ml-auto mr-[19px] flex"><FaCog size={26} color={B} /></span>
    </div>
    <div className="h-[4px] shrink-0 bg-[#e5e5e5]" />
    <div className="flex-1 min-h-0 flex bg-white">
      <div className="w-[867px] shrink-0 flex flex-col">
        <div className="h-[54px] shrink-0 flex items-center pl-[24px] pt-[2px] border-b-2 border-[#c8c8c8] text-[24px] text-[#111]">ILA Status: Idle</div>
        <div className="flex-1 min-h-0 flex pt-[3px]">
          <div className="w-[583px] shrink-0 flex flex-col">
            <div className={`${colHead} pl-[30px]`}>Name</div>
            <div className="flex-1 bg-black overflow-hidden flex flex-col pt-[1px]">
              {rows.map((r, i) => (
                <TreeRow key={i} r={r} i={i} />
              ))}
              <div className="h-[85px] shrink-0 border-b-2 border-white" />
            </div>
          </div>
          <div className="w-[8px] shrink-0" />
          <div className="w-[276px] shrink-0 flex flex-col">
            <div className={`${colHead} pl-[29px]`}>Value</div>
            <div className="flex-1 bg-black overflow-hidden flex flex-col pt-[1px]">
              {rows.map((r, i) => (
                <div
                  key={i}
                  className={`h-[42.030px] flex items-center whitespace-nowrap text-white text-[23.6px] ${i === 0 ? "ml-[5px] pl-[6px] border-2 border-[#4a9ede]" : "pl-[11px]"}`}
                >
                  {r.value}
                </div>
              ))}
              <div className="h-[85px] shrink-0 border-b-2 border-white" />
            </div>
            <div className="h-[29px] shrink-0 bg-[#f4f4f4] flex items-center justify-between -mx-[1px]">
              <Arrow left />
              <span className="w-[174px] h-[18px] rounded-full bg-[#bdbdbd]" />
              <Arrow />
            </div>
          </div>
        </div>
      </div>
      <div className="w-[10px] shrink-0" />
      <div className="flex-1 min-w-0 flex flex-col">
        <div className="flex-1 min-h-0 flex">
          <Waveform />
        </div>
        <div className="h-[29px] shrink-0 bg-[#f4f4f4] flex items-center pl-[4px] pr-[8px]">
          <Arrow left />
          <span className="w-[1762px] h-[16px] ml-[2px] rounded-full bg-[#bdbdbd]" />
        </div>
      </div>
      <div className="w-[29px] shrink-0 bg-[#f9f9f9] flex flex-col justify-between items-center py-[1px]">
        <ChevronUp size={30} color="#8a8a8a" strokeWidth={2.500} />
        <div className="flex flex-col items-center">
          <ChevronDown size={30} color="#8a8a8a" strokeWidth={2.500} className="-mb-[3px]" />
          <Arrow />
        </div>
      </div>
    </div>
  </div>
);

const menus: [string, string, string, number][] = [
  ["", "F", "ile", 85],
  ["", "E", "dit", 91],
  ["F", "l", "ow", 98],
  ["", "T", "ools", 106],
  ["Re", "p", "orts", 135],
  ["", "W", "indow", 139],
  ["La", "y", "out", 124],
  ["", "V", "iew", 101],
  ["", "H", "elp", 106],
];

const App = () => (
  <div className="w-[3840px] h-[2400px] flex flex-col overflow-hidden font-['DejaVu_Sans',sans-serif] bg-white">
    {/* gnome top bar */}
    <div className="h-[54px] shrink-0 bg-[#1c1c1c] flex items-center text-white font-['Noto_Sans',sans-serif] text-[28px] relative">
      <span className="ml-[24px]">Activities</span>
      <svg className="ml-[70px]" width="30" height="34" viewBox="0 0 66 60" preserveAspectRatio="none"><path d="M16 0l24 7 3 24L19 22z" fill="#ccc" /><path d="M0 30l20-13v25L0 54z" fill="#777" /><path d="M20 33l22-2 24 8-26 10z" fill="#ddd" /></svg>
      <span className="ml-[13px]">Vivado</span>
      <ChevronDown size={26} className="ml-[4px]" strokeWidth={1.500} />
      <div className="absolute left-[1906px] top-0 h-[54px] flex items-center gap-[25px]">
        <span className="whitespace-pre">Jul 11   18:12</span>
        <svg width="26" height="30" viewBox="0 0 26 30"><path d="M13 3c-5 0-7 4-7 9 0 6-2 9-5 11h24c-3-2-5-5-5-11 0-5-2-9-7-9zM9 27h8M2 8c1-3 3-5 5-7M24 8c-1-3-3-5-5-7" stroke="#fff" strokeWidth="2" fill="none" /></svg>
      </div>
      <div className="absolute left-[3411px] top-0 h-[54px] flex items-center">
        <svg width="32" height="32" viewBox="0 0 32 32"><path d="M4 3c8-2 16-3 24 0 2 12 1 24-9 27-9 1-17-4-17-14z" fill="#6aa80f" /><path d="M10 16l5 5 8-9" stroke="#fff" strokeWidth="3" fill="none" /></svg>
        <span className="ml-[53px]">en</span>
        <ChevronDown size={26} className="ml-[10px]" strokeWidth={1.500} />
        <svg className="ml-[64px]" width="32" height="28" viewBox="0 0 32 28"><path d="M1 8c9-9 21-9 30 0L16 27z" fill="#fff" /></svg>
        <svg className="ml-[18px]" width="30" height="28" viewBox="0 0 30 28"><path d="M1 9h6l9-7v24l-9-7H1z" fill="#fff" /><path d="M20 8c3 3 3 9 0 12M25 4c5 5 5 15 0 20" stroke="#999" strokeWidth="2" fill="none" /></svg>
        <svg className="ml-[20px]" width="34" height="34" viewBox="0 0 34 34"><path d="M6 6L1 19h4l-3 9 7-13H5l3-9z" fill="#999" /><path d="M14 5h4V2h6v3h4v28H14z" fill="#fff" /><path d="M16 8h10v22H16z" fill="#1c1c1c" /><path d="M17 10h8v19h-8z" fill="#fff" /></svg>
        <ChevronDown size={26} className="ml-[14px]" strokeWidth={1.500} />
      </div>
    </div>
    <div className="flex-1 min-h-0 flex">
      <Dock />
      <div className="flex-1 min-w-0 flex flex-col">
        {/* title bar */}
        <div className="h-[72px] shrink-0 bg-[#333131] relative flex items-center justify-center text-white font-bold text-[28.7px] font-['Noto_Sans',sans-serif] whitespace-nowrap">
          axi_proxy - [/home/jan/FPGA/Chisel/chisel-stuff/example-12-axi-proxy/ultra96v2_prj/project/axi_proxy.xpr] - Vivado 2020.2
          <div className="absolute right-[18px] top-0 h-full flex items-center gap-[32px]">
            <span className="w-[16px] h-[3px] bg-white mt-[10px] mr-[14px]" />
            <svg width="16" height="16" viewBox="0 0 16 16"><path d="M5 4V1h10v10h-3M1 5h11v10H1z" stroke="#fff" strokeWidth="2" fill="none" /></svg>
            <span className="w-[36px] h-[36px] ml-[10px] rounded-full bg-[#e95420] flex items-center justify-center"><X size={24} color="#fff" strokeWidth={2.500} /></span>
          </div>
        </div>
        <div className="h-[2px] shrink-0 bg-[#111]" />
        {/* menu + toolbar */}
        <div className="h-[113px] shrink-0 bg-gradient-to-b from-[#eeeeee] to-[#d6d6d6] flex flex-col">
          <div className="h-[55px] shrink-0 flex items-center text-[24px] text-[#111] pl-[34px] pr-[14px] pt-[4px]">
            {menus.map(([a, u, c, w]) => (
              <span key={u + c} style={{ width: w }}>
                {a}
                <span className="underline underline-offset-[3px]">{u}</span>
                {c}
              </span>
            ))}
            <div className="w-[287px] h-[38px] border-b-2 border-[#bcbcbc] flex items-center text-[#8d8d8d] text-[22.5px] gap-[2px]">
              <span className="text-[#777]">Q</span>
              <span>-</span>
              Quick Access
            </div>
            <span className="ml-auto text-[23.6px]">write_bitstream Complete</span>
            <Check size={36} color="#3fae3f" strokeWidth={4} className="ml-[24px]" />
          </div>
          <div className="flex-1 flex items-center pl-[7px] pr-[20px] pt-[2px]">
            {mainTools.map((t, i) => (
              <div key={i} style={{ width: t.w, paddingLeft: t.shift }} className="relative h-[52px] flex items-center justify-center border-r-2 border-[#dcdcdc]">
                {t.el}
                {t.caret && <span className="absolute right-[6px] bottom-0 w-0 h-0 border-l-[10px] border-l-transparent border-b-[10px] border-b-[#555]" />}
              </div>
            ))}
            <div className="ml-[53px] flex items-center gap-[8px] text-[24px] text-[#111] pr-[16px] h-[52px] border-r-2 border-[#dcdcdc]">
              Dashboard
              <span className="w-0 h-0 border-x-[6px] border-x-transparent border-t-[6px] border-t-[#555]" />
            </div>
            <div className="ml-auto w-[368px] h-[48px] bg-white border-2 border-[#cdcdcd] flex items-center pl-[12px] pr-[10px] text-[23.6px] text-[#111]">
              <svg width="22" height="22" viewBox="0 0 22 22" className="mr-[12px]"><path d="M0 2h9v8H0zM12 2h10v8H12zM0 13h22v9H0z" fill="#b5b5b5" /></svg>
              Default Layout
              <ChevronDown size={30} strokeWidth={3.500} color="#555" className="ml-auto" />
            </div>
          </div>
        </div>
        <div className="h-[2px] shrink-0 bg-[#a8a8a8]" />
        {/* workspace */}
        <div className="flex-1 min-h-0 flex">
          <FlowNavigator />
          <div className="flex-1 min-w-0 flex flex-col bg-white">
            <div className="h-[54px] shrink-0 bg-[#c9ddfc] flex items-center pl-[18px] pr-[8px] text-[#111]">
              <span className="font-bold text-black text-[24px]">HARDWARE MANAGER</span>
              <span className="whitespace-pre text-[23.7px]"> - localhost/xilinx_tcf/Xilinx/u96v2-sbc.local:2542</span>
              <div className="ml-auto flex items-center">
                <WinBtn><Q /></WinBtn>
                <WinBtn><Xx /></WinBtn>
              </div>
            </div>
            <div className="h-[53px] shrink-0 ml-[9px] bg-[#aaffb2] flex items-center pl-[20px] text-[23.4px] text-[#111]">
              <span className="w-[25px] h-[25px] rounded-full bg-[#2e4b80] text-white font-bold italic text-[18px] flex items-center justify-center font-['DejaVu_Serif',serif] mr-[8px]">i</span>
              IP Catalog is out-of-date.
              <span className="ml-[12px] text-[24px] text-[#0a5fe0]">Refresh IP Catalog</span>
            </div>
            <div className="flex-1 min-h-0 flex pt-[17px] pl-[16px]">
              <div className="w-[39px] shrink-0 flex flex-col gap-[13px]">
                <VTab label="ILA Core Properties" h={248} w={35} />
                <VTab label="Hardware" h={136} w={35} />
              </div>
              <div className="flex-1 min-w-0 mr-[17px] flex flex-col border-[6px] border-[#4d7dcd]">
                <div className="h-[51px] shrink-0 bg-[#e5e5e5] flex items-center pl-[8px] pr-[4px]">
                  <span className="font-bold text-[23px] text-black">hw_ila_1</span>
                  <div className="ml-auto flex items-center">
                    <WinBtn><Q /></WinBtn>
                    <WinBtn><Restore /></WinBtn>
                    <WinBtn><Float /></WinBtn>
                    <WinBtn><Xx /></WinBtn>
                  </div>
                </div>
                <div className="flex-1 min-h-0 bg-[#f7f7f7] flex pt-[15px] pb-[14px] pr-[15px]">
                  <div className="w-[40px] shrink-0 -mt-[15px]">
                    <VTab label="Dashboard Options" h={399} w={29} pad={4} />
                  </div>
                  <WaveformPanel />
                </div>
              </div>
            </div>
            <div className="h-[40px] shrink-0 pt-[4px] pl-[56px] flex">
              {["Tcl Console", "Messages", "Serial I/O Links", "Serial I/O Scans"].map((t) => (
                <div key={t} className="w-[198px] border-t border-x border-[#c4c4c4] rounded-t-[3px] flex items-center pl-[6px] text-[24px] text-[#111] whitespace-nowrap">
                  {t}
                </div>
              ))}
            </div>
          </div>
        </div>
        <div className="h-[33px] shrink-0 bg-[#efefef]" />
      </div>
    </div>
  </div>
);

export default App;
